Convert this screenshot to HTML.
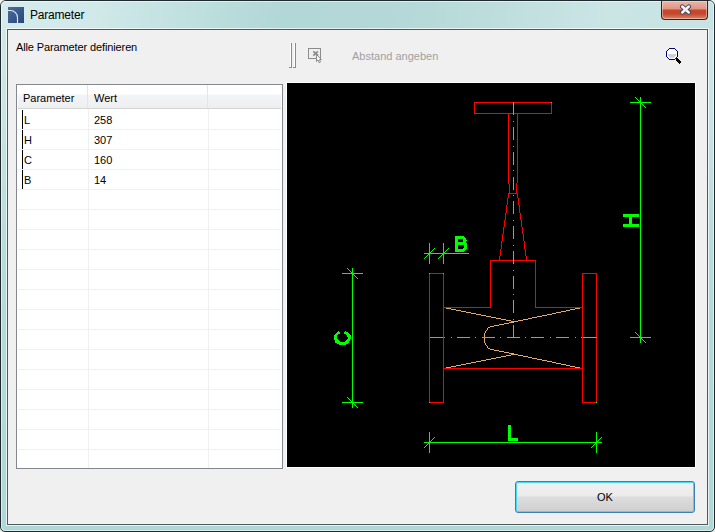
<!DOCTYPE html>
<html><head><meta charset="utf-8">
<style>
html,body{margin:0;padding:0;width:715px;height:532px;overflow:hidden;background:#f0f0f0;}
body{position:relative;font-family:"Liberation Sans",sans-serif;}
.abs{position:absolute;}
#win{position:absolute;left:0;top:0;width:713px;height:530px;border:1px solid #1e2a2e;border-radius:6px 6px 5px 5px;
 background:linear-gradient(#d2e8e8 0px,#c9e4e4 110px,#b8dbdb 240px,#b3d8d8 400px,#b1d6d6 532px);overflow:hidden;}
#tb{position:absolute;left:0;top:0;width:713px;height:29px;background:linear-gradient(100deg,#d6ecec 0px,#d1e9e9 90px,#bddfde 200px,#b1d7d6 280px,#b3d8d7 380px,#bcdddc 480px,#cbe5e5 600px,#c6e2e2 715px);}
#hl{position:absolute;left:0;top:0;right:0;bottom:0;border:1px solid rgba(255,255,255,0.55);border-radius:5px 5px 4px 4px;}
#client{position:absolute;left:7px;top:29px;width:699px;height:494px;border:1px solid #4d5a5c;background:#f0f0f0;}
#client-hl{position:absolute;left:6px;top:28px;width:701px;height:496px;border:1px solid rgba(255,255,255,0.7);}
.t{position:absolute;white-space:nowrap;font-size:11px;line-height:13px;color:#000;}
#title{left:30px;top:8px;font-size:12px;line-height:14px;color:#000;letter-spacing:-0.2px;}
#close{position:absolute;left:661px;top:1px;width:45px;height:18px;border:1px solid #4a1a12;border-top:none;border-radius:0 0 4px 4px;
 background:linear-gradient(#ebb5a8 0px,#e09584 8px,#c9452a 9px,#c24a30 13px,#d9876a 18px);box-shadow:inset 0 0 0 1px rgba(255,230,220,0.45);}
#list{position:absolute;left:16px;top:84px;width:265px;height:383px;border:1px solid #828790;background:#fff;overflow:hidden;}
#hdr{position:absolute;left:1px;top:0px;width:263px;height:23px;background:linear-gradient(#ffffff 0px,#ffffff 9px,#f3f4f6 10px,#eeeff1 23px);border-bottom:1px solid #d5d5d5;}
.hsep{position:absolute;top:0;width:1px;height:23px;background:#e4e5e7;}
.row{position:absolute;left:1px;width:263px;height:1px;background:#f0f0f0;}
.vsep{position:absolute;width:1px;background:#f0f0f0;}
#canvas{position:absolute;left:286px;top:82px;width:408px;height:384px;border:1px solid #ffffff;background:#000;}
#ok{position:absolute;left:515px;top:481px;width:178px;height:30px;border:1px solid #3c7fb1;border-radius:3px;
 background:linear-gradient(#f2f2f2 0px,#ebebeb 14px,#dddddd 15px,#cfcfcf 30px);box-shadow:inset 0 0 0 1px #48d8f8;}
</style></head><body>
<div id="win"><div id="tb"></div><div id="hl"></div></div>
<div id="client-hl"></div>
<div id="client"></div>

<!-- title icon -->
<svg class="abs" style="left:8px;top:7px" width="16" height="16" viewBox="0 0 16 16">
 <defs><linearGradient id="ig" x1="0" y1="0" x2="1" y2="1"><stop offset="0" stop-color="#4a6ca0"/><stop offset="1" stop-color="#2a4677"/></linearGradient></defs>
 <rect x="0" y="0" width="16" height="16" fill="url(#ig)"/>
 <path d="M0,3.5 H2.5 A7,7 0 0 1 9.5,10.5 V16" fill="none" stroke="#dfe6f0" stroke-width="1.15"/>
</svg>
<div class="t" id="title">Parameter</div>

<div id="close"></div>
<svg class="abs" style="left:679px;top:4px" width="14" height="12" viewBox="0 0 14 12">
 <path d="M3.2,2.6 L9.8,8.4 M9.8,2.6 L3.2,8.4" stroke="#3b4356" stroke-width="4.4" stroke-linecap="round"/>
 <path d="M3.2,2.6 L9.8,8.4 M9.8,2.6 L3.2,8.4" stroke="#f4f4f8" stroke-width="2.6" stroke-linecap="round"/>
</svg>

<div class="t" style="left:16px;top:41px;letter-spacing:-0.12px;">Alle Parameter definieren</div>

<!-- toolbar grip -->
<div class="abs" style="left:290px;top:43px;width:1px;height:25px;background:#ffffff"></div>
<div class="abs" style="left:291px;top:43px;width:1px;height:25px;background:#8a8a8a"></div>
<div class="abs" style="left:294px;top:43px;width:1px;height:25px;background:#ffffff"></div>
<div class="abs" style="left:295px;top:43px;width:1px;height:25px;background:#8a8a8a"></div>
<svg class="abs" style="left:306px;top:46px" width="18" height="18" viewBox="0 0 18 18">
 <rect x="2.5" y="2.5" width="12" height="10" fill="none" stroke="#8c8c8c" shape-rendering="crispEdges"/>
 <path d="M7.3,5.3 L12.2,9.6 M12,5.3 L7.3,9.6" stroke="#8a8a8a" stroke-width="1.6" fill="none"/>
 <path d="M10.5,8.5 L10.5,15.5 L12,14 L13,16.5 L14.5,16 L13.5,13.5 L15.5,13.5 Z" fill="#f6f6f6" stroke="#8c8c8c" stroke-width="1" stroke-linejoin="round"/>
</svg>
<div class="abs" style="left:289px;top:67px;width:3px;height:1px;background:#8a8a8a"></div>
<div class="abs" style="left:293px;top:67px;width:3px;height:1px;background:#8a8a8a"></div>
<div class="t" style="left:352px;top:50px;color:#a0a0a0;">Abstand angeben</div>

<!-- magnifier -->
<svg class="abs" style="left:664px;top:46px" width="20" height="20" viewBox="0 0 20 20" shape-rendering="crispEdges">
 <path d="M5,2h6v1h1v1h1v1h1v6h-1v1h-1v1h-1v1h-6v-1h-1v-1h-1v-1h-1v-6h1v-1h1v-1h1z" fill="#000080"/>
 <path d="M5,3h6v1h1v1h1v6h-1v1h-1v1h-6v-1h-1v-1h-1v-6h1v-1h1z" fill="#ffffff"/>
 <path d="M4,8h8v2h-1v1h-1v1h-4v-1h-1v-1h-1z" fill="#cfcfe0"/>
 <path d="M12,12h2v1h1v1h1v1h1v2h-1v1h-1v-1h-1v-1h-1v-1h-1z" fill="#000"/>
</svg>

<!-- list -->
<div id="list">
 <div id="hdr">
  <div class="hsep" style="left:69px"></div>
  <div class="hsep" style="left:189px"></div>
 </div>
 <div class="t" style="left:6px;top:7px;">Parameter</div>
 <div class="t" style="left:77px;top:7px;">Wert</div>
</div>
<div id="rows">
<div class="abs" style="left:18px;top:129px;width:263px;height:1px;background:#f0f0f0"></div>
<div class="abs" style="left:18px;top:149px;width:263px;height:1px;background:#f0f0f0"></div>
<div class="abs" style="left:18px;top:169px;width:263px;height:1px;background:#f0f0f0"></div>
<div class="abs" style="left:18px;top:189px;width:263px;height:1px;background:#f0f0f0"></div>
<div class="abs" style="left:18px;top:209px;width:263px;height:1px;background:#f0f0f0"></div>
<div class="abs" style="left:18px;top:229px;width:263px;height:1px;background:#f0f0f0"></div>
<div class="abs" style="left:18px;top:249px;width:263px;height:1px;background:#f0f0f0"></div>
<div class="abs" style="left:18px;top:269px;width:263px;height:1px;background:#f0f0f0"></div>
<div class="abs" style="left:18px;top:289px;width:263px;height:1px;background:#f0f0f0"></div>
<div class="abs" style="left:18px;top:309px;width:263px;height:1px;background:#f0f0f0"></div>
<div class="abs" style="left:18px;top:329px;width:263px;height:1px;background:#f0f0f0"></div>
<div class="abs" style="left:18px;top:349px;width:263px;height:1px;background:#f0f0f0"></div>
<div class="abs" style="left:18px;top:369px;width:263px;height:1px;background:#f0f0f0"></div>
<div class="abs" style="left:18px;top:389px;width:263px;height:1px;background:#f0f0f0"></div>
<div class="abs" style="left:18px;top:409px;width:263px;height:1px;background:#f0f0f0"></div>
<div class="abs" style="left:18px;top:429px;width:263px;height:1px;background:#f0f0f0"></div>
<div class="abs" style="left:18px;top:449px;width:263px;height:1px;background:#f0f0f0"></div>
<div class="abs" style="left:88px;top:109px;width:1px;height:359px;background:#f0f0f0"></div>
<div class="abs" style="left:208px;top:109px;width:1px;height:359px;background:#f0f0f0"></div>
<div class="abs" style="left:22px;top:110px;width:1px;height:19px;background:#000"></div>
<div class="t" style="left:24px;top:114px;">L</div>
<div class="t" style="left:94px;top:114px;">258</div>
<div class="abs" style="left:22px;top:130px;width:1px;height:19px;background:#000"></div>
<div class="t" style="left:24px;top:134px;">H</div>
<div class="t" style="left:94px;top:134px;">307</div>
<div class="abs" style="left:22px;top:150px;width:1px;height:19px;background:#000"></div>
<div class="t" style="left:24px;top:154px;">C</div>
<div class="t" style="left:94px;top:154px;">160</div>
<div class="abs" style="left:22px;top:170px;width:1px;height:19px;background:#000"></div>
<div class="t" style="left:24px;top:174px;">B</div>
<div class="t" style="left:94px;top:174px;">14</div>
</div>

<div id="canvas"></div>
<!--DRAW--><svg class="abs" style="left:0;top:0" width="715" height="532" viewBox="0 0 715 532" shape-rendering="crispEdges">
<path fill="#ff0000" d="M474,102h78v1h-78zM474,113h78v1h-78zM474,102h1v12h-1zM551,102h1v12h-1zM508,114h1v70h-1zM509,184h1v9h-1zM517,114h1v69h-1zM516,183h1v10h-1zM508,193h10v1h-10zM490,260h46v1h-46zM490,260h1v48h-1zM535,260h1v48h-1zM443,307h48v1h-48zM535,307h48v1h-48zM443,368h140v1h-140zM429,273h15v1h-15zM429,402h15v1h-15zM429,273h1v130h-1zM443,273h1v130h-1zM582,273h15v1h-15zM582,402h15v1h-15zM582,273h1v130h-1zM596,273h1v130h-1zM508,194h1v1h-1zM508,195h1v1h-1zM508,196h1v1h-1zM508,197h1v1h-1zM507,198h1v1h-1zM507,199h1v1h-1zM507,200h1v1h-1zM507,201h1v1h-1zM507,202h1v1h-1zM507,203h1v1h-1zM507,204h1v1h-1zM506,205h1v1h-1zM506,206h1v1h-1zM506,207h1v1h-1zM506,208h1v1h-1zM506,209h1v1h-1zM506,210h1v1h-1zM506,211h1v1h-1zM506,212h1v1h-1zM505,213h1v1h-1zM505,214h1v1h-1zM505,215h1v1h-1zM505,216h1v1h-1zM505,217h1v1h-1zM505,218h1v1h-1zM505,219h1v1h-1zM504,220h1v1h-1zM504,221h1v1h-1zM504,222h1v1h-1zM504,223h1v1h-1zM504,224h1v1h-1zM504,225h1v1h-1zM504,226h1v1h-1zM503,227h1v1h-1zM503,228h1v1h-1zM503,229h1v1h-1zM503,230h1v1h-1zM503,231h1v1h-1zM503,232h1v1h-1zM503,233h1v1h-1zM502,234h1v1h-1zM502,235h1v1h-1zM502,236h1v1h-1zM502,237h1v1h-1zM502,238h1v1h-1zM502,239h1v1h-1zM502,240h1v1h-1zM501,241h1v1h-1zM501,242h1v1h-1zM501,243h1v1h-1zM501,244h1v1h-1zM501,245h1v1h-1zM501,246h1v1h-1zM501,247h1v1h-1zM501,248h1v1h-1zM500,249h1v1h-1zM500,250h1v1h-1zM500,251h1v1h-1zM500,252h1v1h-1zM500,253h1v1h-1zM500,254h1v1h-1zM500,255h1v1h-1zM499,256h1v1h-1zM499,257h1v1h-1zM499,258h1v1h-1zM499,259h1v1h-1zM517,194h1v1h-1zM517,195h1v1h-1zM517,196h1v1h-1zM517,197h1v1h-1zM518,198h1v1h-1zM518,199h1v1h-1zM518,200h1v1h-1zM518,201h1v1h-1zM518,202h1v1h-1zM518,203h1v1h-1zM518,204h1v1h-1zM519,205h1v1h-1zM519,206h1v1h-1zM519,207h1v1h-1zM519,208h1v1h-1zM519,209h1v1h-1zM519,210h1v1h-1zM519,211h1v1h-1zM519,212h1v1h-1zM520,213h1v1h-1zM520,214h1v1h-1zM520,215h1v1h-1zM520,216h1v1h-1zM520,217h1v1h-1zM520,218h1v1h-1zM520,219h1v1h-1zM521,220h1v1h-1zM521,221h1v1h-1zM521,222h1v1h-1zM521,223h1v1h-1zM521,224h1v1h-1zM521,225h1v1h-1zM521,226h1v1h-1zM522,227h1v1h-1zM522,228h1v1h-1zM522,229h1v1h-1zM522,230h1v1h-1zM522,231h1v1h-1zM522,232h1v1h-1zM522,233h1v1h-1zM523,234h1v1h-1zM523,235h1v1h-1zM523,236h1v1h-1zM523,237h1v1h-1zM523,238h1v1h-1zM523,239h1v1h-1zM523,240h1v1h-1zM524,241h1v1h-1zM524,242h1v1h-1zM524,243h1v1h-1zM524,244h1v1h-1zM524,245h1v1h-1zM524,246h1v1h-1zM524,247h1v1h-1zM524,248h1v1h-1zM525,249h1v1h-1zM525,250h1v1h-1zM525,251h1v1h-1zM525,252h1v1h-1zM525,253h1v1h-1zM525,254h1v1h-1zM525,255h1v1h-1zM526,256h1v1h-1zM526,257h1v1h-1zM526,258h1v1h-1zM526,259h1v1h-1z"/>
<path fill="#e4a872" d="M446,308h5v1h-5zM446,367h5v1h-5zM451,309h5v1h-5zM451,366h5v1h-5zM456,310h5v1h-5zM456,365h5v1h-5zM461,311h5v1h-5zM461,364h5v1h-5zM466,312h5v1h-5zM466,363h5v1h-5zM471,313h5v1h-5zM471,362h5v1h-5zM476,314h5v1h-5zM476,361h5v1h-5zM481,315h5v1h-5zM481,360h5v1h-5zM486,316h5v1h-5zM486,359h5v1h-5zM491,317h5v1h-5zM491,358h5v1h-5zM496,318h5v1h-5zM496,357h5v1h-5zM501,319h5v1h-5zM501,356h5v1h-5zM506,320h5v1h-5zM506,355h5v1h-5zM511,321h5v1h-5zM511,354h5v1h-5zM575,308h5v1h-5zM575,367h5v1h-5zM570,309h5v1h-5zM570,366h5v1h-5zM566,310h4v1h-4zM566,365h4v1h-4zM561,311h5v1h-5zM561,364h5v1h-5zM556,312h5v1h-5zM556,363h5v1h-5zM552,313h4v1h-4zM552,362h4v1h-4zM547,314h5v1h-5zM547,361h5v1h-5zM542,315h5v1h-5zM542,360h5v1h-5zM537,316h5v1h-5zM537,359h5v1h-5zM532,317h5v1h-5zM532,358h5v1h-5zM528,318h4v1h-4zM528,357h4v1h-4zM523,319h5v1h-5zM523,356h5v1h-5zM518,320h5v1h-5zM518,355h5v1h-5zM514,321h4v1h-4zM514,354h4v1h-4zM509,322h5v1h-5zM509,353h5v1h-5zM504,323h5v1h-5zM504,352h5v1h-5zM499,324h5v1h-5zM499,351h5v1h-5zM494,325h5v1h-5zM494,350h5v1h-5zM490,326h4v1h-4zM490,349h4v1h-4zM488,327h2v1h-2zM488,348h2v1h-2zM487,328h1v1h-1zM487,347h1v1h-1zM487,329h1v1h-1zM487,346h1v1h-1zM486,330h1v1h-1zM486,345h1v1h-1zM485,331h1v1h-1zM485,344h1v1h-1zM485,332h1v1h-1zM485,343h1v1h-1zM484,333h1v10h-1z"/>
<path fill="#70a2dc" d="M513,102h1v13h-1zM513,121h1v1h-1zM513,127h1v13h-1zM513,146h1v1h-1zM513,152h1v13h-1zM513,170h1v1h-1zM513,177h1v13h-1zM513,195h1v1h-1zM513,201h1v13h-1zM513,220h1v1h-1zM513,226h1v13h-1zM513,245h1v1h-1zM513,251h1v13h-1zM513,270h1v1h-1zM513,276h1v13h-1zM513,294h1v1h-1zM513,300h1v13h-1zM513,319h1v1h-1zM513,325h1v13h-1zM430,337h15v1h-15zM451,337h1v1h-1zM457,337h13v1h-13zM475,337h1v1h-1zM482,337h13v1h-13zM500,337h1v1h-1zM507,337h13v1h-13zM525,337h1v1h-1zM531,337h13v1h-13zM550,337h1v1h-1zM556,337h13v1h-13zM575,337h1v1h-1zM581,337h16v1h-16z"/>
<path fill="#ff0000" d="M429,273h15v1h-15zM429,402h15v1h-15zM429,273h1v130h-1zM443,273h1v130h-1zM582,273h15v1h-15zM582,402h15v1h-15zM582,273h1v130h-1zM596,273h1v130h-1z"/>
<path fill="#00ff00" d="M424,253h45v1h-45zM429,243h1v21h-1zM443,243h1v21h-1zM352,268h1v140h-1zM342,273h21v1h-21zM342,402h21v1h-21zM640,97h1v246h-1zM630,102h21v1h-21zM630,337h21v1h-21zM424,442h178v1h-178zM429,432h1v21h-1zM596,432h1v21h-1zM455,236h9v1h-9zM455,237h10v1h-10zM455,238h11v1h-11zM455,239h3v1h-3zM463,239h3v1h-3zM455,240h3v1h-3zM463,240h4v1h-4zM455,241h3v1h-3zM463,241h3v1h-3zM455,242h11v1h-11zM455,243h12v1h-12zM455,244h12v1h-12zM455,245h3v1h-3zM464,245h3v1h-3zM455,246h3v1h-3zM464,246h3v1h-3zM455,247h3v1h-3zM464,247h3v1h-3zM455,248h3v1h-3zM463,248h4v1h-4zM455,249h11v1h-11zM455,250h10v1h-10zM455,251h9v1h-9zM338,331h1v1h-1zM345,331h1v1h-1zM337,332h3v1h-3zM344,332h4v1h-4zM336,333h4v1h-4zM344,333h5v1h-5zM335,334h3v1h-3zM346,334h4v1h-4zM334,335h3v1h-3zM347,335h4v1h-4zM334,336h3v1h-3zM347,336h4v1h-4zM334,337h3v1h-3zM348,337h3v1h-3zM334,338h3v1h-3zM348,338h3v1h-3zM334,339h4v1h-4zM347,339h3v1h-3zM335,340h4v1h-4zM346,340h4v1h-4zM335,341h5v1h-5zM345,341h4v1h-4zM335,342h14v1h-14zM337,343h11v1h-11zM339,344h7v1h-7zM623,214h16v3h-16zM623,224h16v3h-16zM629,217h3v7h-3zM508,425h3v16h-3zM508,438h10v3h-10zM424,258h1v1h-1zM425,257h1v1h-1zM426,256h1v1h-1zM427,255h1v1h-1zM428,254h1v1h-1zM429,253h1v1h-1zM430,252h1v1h-1zM431,251h1v1h-1zM432,250h1v1h-1zM433,249h1v1h-1zM434,248h1v1h-1zM438,258h1v1h-1zM439,257h1v1h-1zM440,256h1v1h-1zM441,255h1v1h-1zM442,254h1v1h-1zM443,253h1v1h-1zM444,252h1v1h-1zM445,251h1v1h-1zM446,250h1v1h-1zM447,249h1v1h-1zM448,248h1v1h-1zM347,268h1v1h-1zM348,269h1v1h-1zM349,270h1v1h-1zM350,271h1v1h-1zM351,272h1v1h-1zM352,273h1v1h-1zM353,274h1v1h-1zM354,275h1v1h-1zM355,276h1v1h-1zM356,277h1v1h-1zM357,278h1v1h-1zM347,397h1v1h-1zM348,398h1v1h-1zM349,399h1v1h-1zM350,400h1v1h-1zM351,401h1v1h-1zM352,402h1v1h-1zM353,403h1v1h-1zM354,404h1v1h-1zM355,405h1v1h-1zM356,406h1v1h-1zM357,407h1v1h-1zM635,97h1v1h-1zM636,98h1v1h-1zM637,99h1v1h-1zM638,100h1v1h-1zM639,101h1v1h-1zM640,102h1v1h-1zM641,103h1v1h-1zM642,104h1v1h-1zM643,105h1v1h-1zM644,106h1v1h-1zM645,107h1v1h-1zM635,332h1v1h-1zM636,333h1v1h-1zM637,334h1v1h-1zM638,335h1v1h-1zM639,336h1v1h-1zM640,337h1v1h-1zM641,338h1v1h-1zM642,339h1v1h-1zM643,340h1v1h-1zM644,341h1v1h-1zM645,342h1v1h-1zM424,447h1v1h-1zM425,446h1v1h-1zM426,445h1v1h-1zM427,444h1v1h-1zM428,443h1v1h-1zM429,442h1v1h-1zM430,441h1v1h-1zM431,440h1v1h-1zM432,439h1v1h-1zM433,438h1v1h-1zM434,437h1v1h-1zM591,447h1v1h-1zM592,446h1v1h-1zM593,445h1v1h-1zM594,444h1v1h-1zM595,443h1v1h-1zM596,442h1v1h-1zM597,441h1v1h-1zM598,440h1v1h-1zM599,439h1v1h-1zM600,438h1v1h-1zM601,437h1v1h-1zM551,102h1v1h-1zM429,273h1v1h-1zM443,273h1v1h-1zM429,402h1v1h-1zM596,402h1v1h-1zM596,337h1v1h-1z"/>
</svg><!--/DRAW-->

<div id="ok"></div>
<div class="t" style="left:597px;top:491px;">OK</div>
</body></html>
